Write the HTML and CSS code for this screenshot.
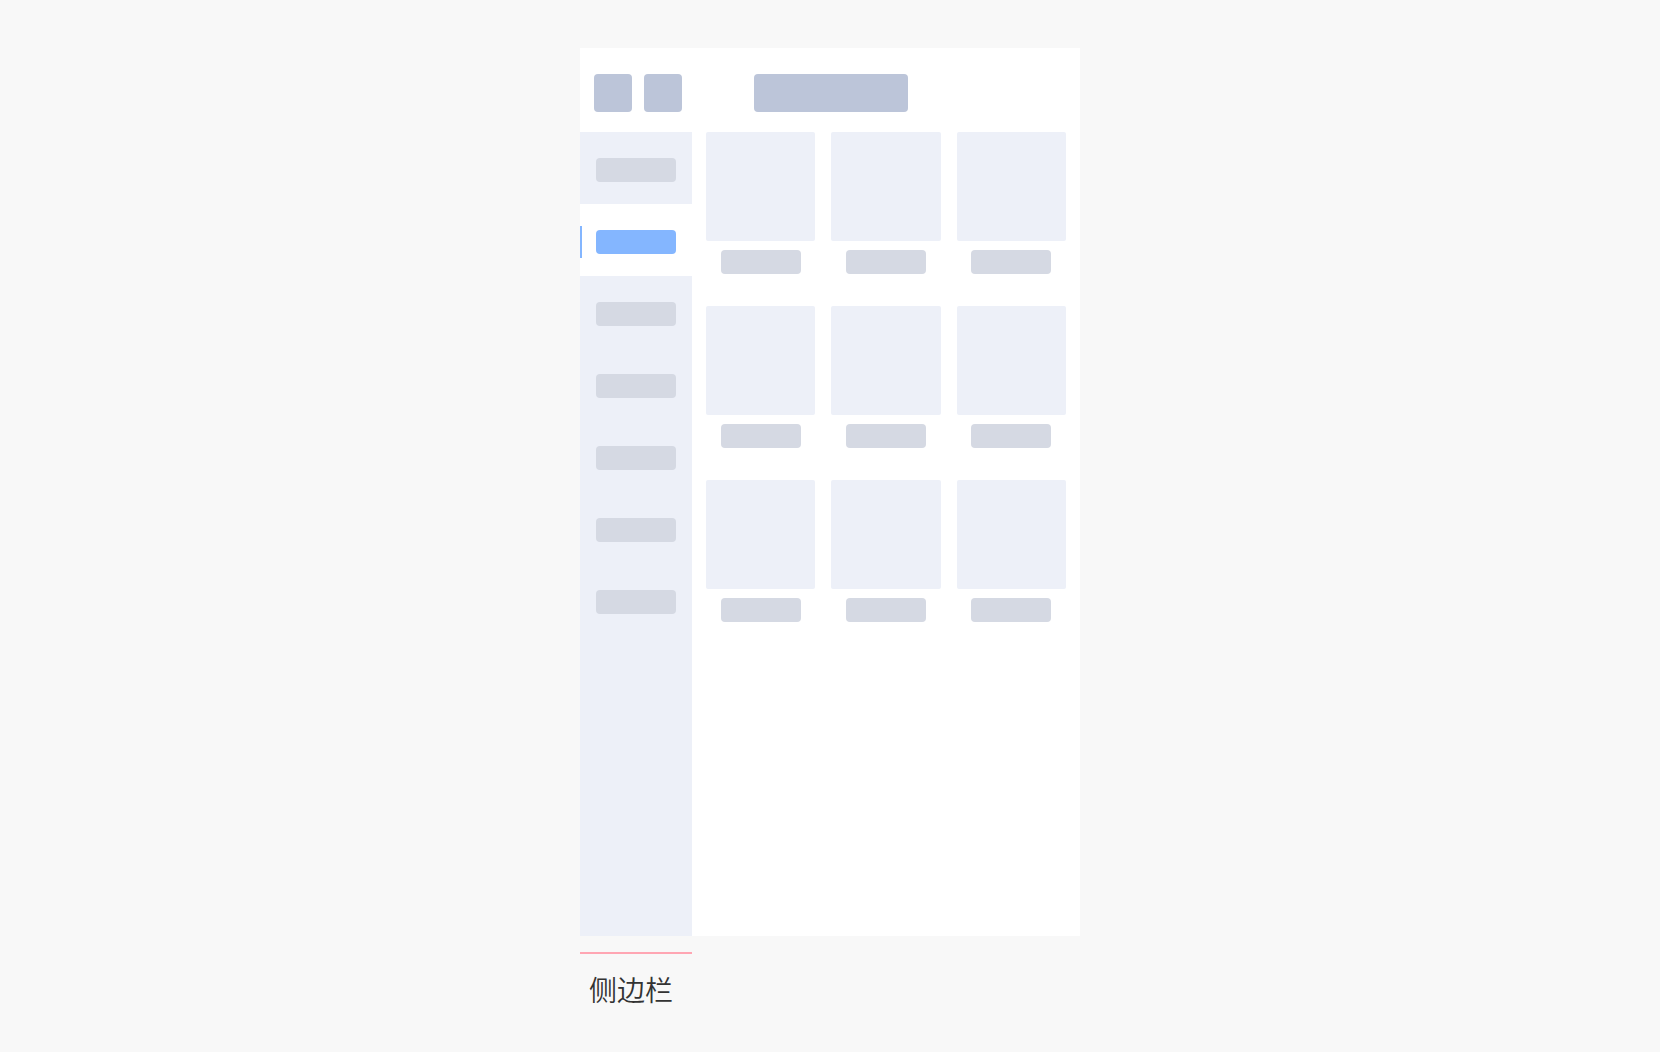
FILE: index.html
```html
<!DOCTYPE html>
<html lang="zh-CN">
<head>
<meta charset="utf-8">
<meta name="viewport" content="width=device-width, initial-scale=1">
<title>侧边栏</title>
<link rel="stylesheet" href="styles.css">
</head>
<body>
<figure class="demo">
  <div class="screen">
    <header class="topbar">
      <div class="actions">
        <span class="block action"></span>
        <span class="block action"></span>
      </div>
      <span class="block title"></span>
    </header>
    <div class="content">
      <ul class="sidebar">
        <li class="item"><span class="label"></span></li>
        <li class="item active"><span class="label"></span></li>
        <li class="item"><span class="label"></span></li>
        <li class="item"><span class="label"></span></li>
        <li class="item"><span class="label"></span></li>
        <li class="item"><span class="label"></span></li>
        <li class="item"><span class="label"></span></li>
      </ul>
      <main class="grid">
        <div class="card"><span class="thumb"></span><span class="label"></span></div>
        <div class="card"><span class="thumb"></span><span class="label"></span></div>
        <div class="card"><span class="thumb"></span><span class="label"></span></div>
        <div class="card"><span class="thumb"></span><span class="label"></span></div>
        <div class="card"><span class="thumb"></span><span class="label"></span></div>
        <div class="card"><span class="thumb"></span><span class="label"></span></div>
        <div class="card"><span class="thumb"></span><span class="label"></span></div>
        <div class="card"><span class="thumb"></span><span class="label"></span></div>
        <div class="card"><span class="thumb"></span><span class="label"></span></div>
      </main>
    </div>
  </div>
  <figcaption class="caption">侧边栏</figcaption>
</figure>
</body>
</html>
```
FILE: styles.css
```css
* {
  box-sizing: border-box;
}

body {
  margin: 0;
  background: #f8f8f8;
  color: #333;
  font-family: "Noto Sans CJK SC", "Noto Sans", sans-serif;
}

.demo {
  width: 100%;
  max-width: 500px;
  margin: 0 auto;
  padding: 48px 0 24px;
}

.screen {
  background: #fff;
}

.topbar {
  display: flex;
  align-items: center;
  gap: 72px;
  padding: 26px 14px 20px;
}

.actions {
  display: flex;
  gap: 12px;
}

.block {
  height: 38px;
  border-radius: 4px;
  background: #bcc5d9;
}

.action {
  width: 38px;
}

.title {
  width: 154px;
}

.content {
  display: flex;
  min-height: 804px;
}

.sidebar {
  flex: none;
  width: 112px;
  margin: 0;
  padding: 0;
  list-style: none;
  background: #edf0f8;
}

.item {
  position: relative;
  height: 72px;
  padding: 26px 16px 22px;
}

.label {
  display: block;
  width: 80px;
  height: 24px;
  border-radius: 4px;
  background: #d5d9e3;
}

.active {
  background: #fff;
}

.active .label {
  background: #84b6ff;
}

/* Selection marker on the item's left edge */
.active::before {
  content: "";
  position: absolute;
  top: 22px;
  left: 0;
  width: 2px;
  height: 32px;
  background: #84b6ff;
}

.grid {
  flex: 1;
  display: grid;
  grid-template-columns: repeat(3, 1fr);
  align-content: start;
  gap: 32px 16px;
  padding: 0 14px;
}

.card {
  display: flex;
  flex-direction: column;
  align-items: center;
  gap: 9px;
}

.thumb {
  width: 100%;
  height: 109px;
  border-radius: 2px;
  background: #edf0f8;
}

.caption {
  width: 112px;
  margin-top: 16px;
  padding: 15px 9px 0;
  border-top: 2px solid #ffa6b3;
  font-size: 28px;
  font-weight: 350;
  line-height: 40px;
}
```
